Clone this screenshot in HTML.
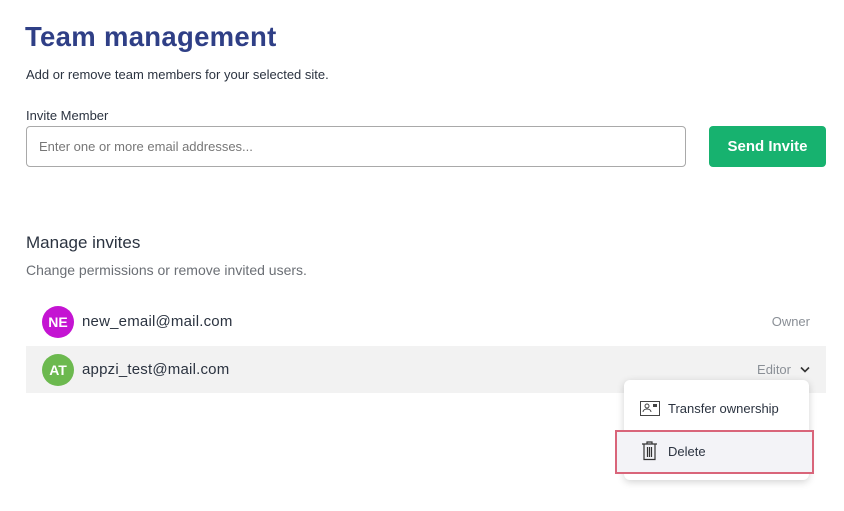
<!DOCTYPE html>
<html><head><meta charset="utf-8"><style>
*{box-sizing:border-box;margin:0;padding:0}
body{width:844px;height:511px;background:#fff;font-family:"Liberation Sans",sans-serif;color:#2b3340;position:relative;overflow:hidden}
.a{position:absolute;white-space:nowrap}
h1{position:absolute;left:25px;top:21px;font-size:27.5px;font-weight:bold;color:#2f3f86;letter-spacing:0.3px}
.input{position:absolute;left:26px;top:126px;width:660px;height:41px;border:1px solid #a9a9a9;border-radius:4px;font-size:13px;color:#777;padding:12px 12px}
.btn{position:absolute;left:709px;top:126px;width:117px;height:41px;background:#17b26f;border-radius:4px;color:#fff;font-weight:bold;font-size:15px;text-align:center;line-height:41px}
.row{position:absolute;left:26px;width:800px;height:47px}
.av{position:absolute;left:16px;top:8px;width:32px;height:32px;border-radius:50%;color:#fff;font-weight:bold;font-size:14px;text-align:center;line-height:32px}
.em{position:absolute;left:56px;top:15px;font-size:15px;color:#2b3340;letter-spacing:0.2px}
.menu{position:absolute;left:624px;top:380px;width:185px;height:100px;background:#fff;border-radius:6px;box-shadow:0 2px 8px rgba(0,0,0,.18)}
.hl{position:absolute;left:615px;top:430px;width:199px;height:44px;border:2px solid #d9657a;background:#f3f3f7}
</style></head><body>
<h1>Team management</h1>
<div class="a" style="left:26px;top:67px;font-size:13px">Add or remove team members for your selected site.</div>
<div class="a" style="left:26px;top:108px;font-size:13px">Invite Member</div>
<div class="input">Enter one or more email addresses...</div>
<div class="btn">Send Invite</div>
<div class="a" style="left:26px;top:233px;font-size:17px">Manage invites</div>
<div class="a" style="left:26px;top:262px;font-size:14px;color:#6b6f75">Change permissions or remove invited users.</div>
<div class="row" style="top:298px"><div class="av" style="background:#c414d2">NE</div><div class="em">new_email@mail.com</div>
<div class="a" style="right:16px;top:16px;font-size:13px;color:#8a8f96">Owner</div></div>
<div class="row" style="top:346px;background:#f2f2f2"><div class="av" style="background:#6cb94f">AT</div><div class="em">appzi_test@mail.com</div>
<div class="a" style="right:35px;top:16px;font-size:13px;color:#8a8f96">Editor</div>
<svg class="a" style="right:16px;top:20px" width="10" height="7" viewBox="0 0 10 7"><path d="M1 1.5l4 4 4-4" fill="none" stroke="#333" stroke-width="1.6"/></svg></div>
<div class="menu"></div>
<div class="hl"></div>
<svg class="a" style="left:640px;top:401px" width="20" height="15" viewBox="0 0 20 15"><rect x="0.5" y="0.5" width="19" height="14" fill="none" stroke="#444"/><circle cx="7" cy="5" r="2" fill="none" stroke="#444"/><path d="M3 11c0-2 2-3 4-3s4 1 4 3" fill="none" stroke="#444"/><rect x="13" y="3" width="4" height="3" fill="#444"/></svg>
<div class="a" style="left:668px;top:401px;font-size:13px;color:#2b3340">Transfer ownership</div>
<svg class="a" style="left:641px;top:441px" width="17" height="20" viewBox="0 0 17 20"><path d="M1 3h15M6 3V1h5v2M3 3v15.5h11V3M6.5 6v10M8.5 6v10M10.5 6v10" fill="none" stroke="#333" stroke-width="1.2"/></svg>
<div class="a" style="left:668px;top:444px;font-size:13px;color:#2b3340">Delete</div>
</body></html>
